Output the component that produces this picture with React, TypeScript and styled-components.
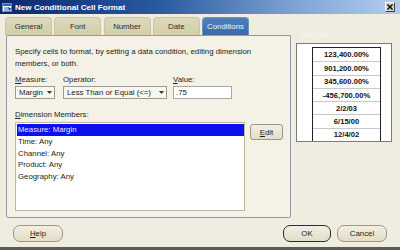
import React from "react";
import styled, { createGlobalStyle, css } from "styled-components";

const GlobalStyle = createGlobalStyle`
  html, body { margin: 0; padding: 0; background: #efeddf; }
  body { font-family: "Liberation Sans", Arial, sans-serif; font-size: 7.8px; color: #222; }
  * { box-sizing: border-box; }
`;

const Window = styled.div`
  width: 400px;
  height: 250px;
  background: #efeddf;
  display: flex;
  flex-direction: column;
  border-bottom: 3px solid #5c5c58;
  overflow: hidden;
`;

const TitleBar = styled.div`
  height: 14px;
  flex: none;
  display: flex;
  align-items: center;
  padding: 0 5px 0 2px;
  background: linear-gradient(to right, #0b2670 0%, #2a5aa0 40%, #7fa6d6 75%, #b4cdee 100%);
`;

const TitleText = styled.span`
  flex: 1;
  margin-left: 2px;
  color: #fff;
  font-weight: bold;
  font-size: 8.1px;
`;

const CloseBtn = styled.div`
  width: 10px;
  height: 10px;
  background: #d4d0c8;
  border: 1px solid;
  border-color: #ffffff #404040 #404040 #ffffff;
  display: flex;
  align-items: center;
  justify-content: center;
`;

const Body = styled.div`
  flex: 1;
  display: flex;
  flex-direction: column;
  padding: 3px 0 0 5px;
`;

const Main = styled.div`
  display: flex;
  gap: 5px;
`;

const LeftCol = styled.div`
  width: 286px;
  display: flex;
  flex-direction: column;
`;

const Tabs = styled.div`
  display: flex;
  gap: 2.25px;
  height: 18px;
  position: relative;
  z-index: 1;
`;

const Tab = styled.div<{ $active?: boolean }>`
  width: 47px;
  height: 18px;
  display: flex;
  align-items: center;
  justify-content: center;
  border-radius: 4px 4px 0 0;
  border: 1px solid #c9c5a6;
  border-bottom: none;
  background: linear-gradient(#dcd9bb, #d1cea9);
  color: #2e2e26;
  ${(p) =>
    p.$active &&
    css`
      background: linear-gradient(#4f80bb, #3a6aa6);
      border-color: #6b93c4;
      color: #f4f7ff;
    `}
`;

const Panel = styled.div`
  margin-left: 1px;
  height: 183px;
  border: 1px solid #8f9ca8;
  border-radius: 0 0 2px 2px;
  background: #f4f2e6;
  padding: 10px 0 0 8px;
  display: flex;
  flex-direction: column;
`;

const Desc = styled.div`
  line-height: 12px;
  width: 250px;
`;

const FieldRow = styled.div`
  display: flex;
  margin-top: 4px;
`;

const Field = styled.div<{ $w: number; $gap: number }>`
  width: ${(p) => p.$w}px;
  margin-right: ${(p) => p.$gap}px;
  display: flex;
  flex-direction: column;
`;

const Label = styled.div`
  line-height: 12px;
  height: 12px;
`;

const U = styled.span`
  text-decoration: underline;
`;

const SelectBox = styled.div`
  height: 13px;
  border: 1px solid #9c9a90;
  background: #f8f7f0;
  display: flex;
  align-items: center;
  padding-left: 3px;
`;

const SelectText = styled.span`
  flex: 1;
`;

const Arrow = styled.span`
  width: 10px;
  display: flex;
  justify-content: center;
`;

const InputBox = styled.div`
  height: 13px;
  border: 1px solid #a9a79c;
  background: #ffffff;
  display: flex;
  align-items: center;
  padding-left: 2px;
`;

const DimLabel = styled.div`
  margin-top: 10px;
  line-height: 12px;
`;

const ListRow = styled.div`
  display: flex;
  gap: 5px;
  margin-top: 1px;
  align-items: flex-start;
`;

const ListBox = styled.div`
  width: 230px;
  height: 89px;
  border: 1px solid #bdb9a0;
  background: #fff;
  padding: 1px 0 0 1px;
`;

const ListItem = styled.div<{ $selected?: boolean }>`
  height: 11.75px;
  line-height: 11.75px;
  padding-left: 1px;
  ${(p) =>
    p.$selected &&
    css`
      background: #0c10ec;
      color: #e9e8ff;
    `}
`;

const Btn = styled.div<{ $w: number; $round?: boolean; $default?: boolean }>`
  width: ${(p) => p.$w}px;
  height: ${(p) => (p.$round ? 17 : 16)}px;
  display: flex;
  align-items: center;
  justify-content: center;
  background: linear-gradient(#f2efe2, #e2ddc8);
  border: 1px solid #9d9683;
  border-radius: ${(p) => (p.$round ? "7px" : "3px")};
  color: #222;
  ${(p) =>
    p.$default &&
    css`
      border: 1.5px solid #2e2c26;
    `}
`;

const EditBtn = styled(Btn)`
  margin-top: 2px;
`;

const PreviewCol = styled.div`
  width: 96px;
  display: flex;
  flex-direction: column;
  padding-top: 12px;
`;

const PreviewLabel = styled.div`
  line-height: 12px;
  padding-left: 5px;
  color: #f7f6ee;
`;

const PreviewBox = styled.div`
  margin-top: 2px;
  height: 99px;
  border: 1px solid #7d7d78;
  background: #fff;
  display: flex;
  padding: 3px 0 0 15px;
`;

const Table = styled.div`
  width: 69px;
  border: 1px solid #222;
  border-bottom: none;
  display: flex;
  flex-direction: column;
`;

const Cell = styled.div`
  height: 13.6px;
  display: flex;
  align-items: center;
  justify-content: center;
  font-weight: bold;
  font-size: 7.6px;
  color: #111;
  border-top: 1px solid #c8c8c8;
  &:first-child { border-top: none; }
`;

const Footer = styled.div`
  display: flex;
  align-items: center;
  margin-top: 7px;
  padding: 0 13px 0 8px;
  gap: 6px;
`;

const Spacer = styled.div`
  flex: 1;
`;

const TitleIcon = () => (
  <svg width="11" height="11" viewBox="0 0 11 11">
    <rect x="0.5" y="1.5" width="9" height="8" fill="#fff" stroke="#6d8fc0" />
    <rect x="1" y="2" width="8" height="2" fill="#3466b0" />
    <path d="M2 6h5M2 8h4" stroke="#3466b0" strokeWidth="1" />
    <path d="M6 5l4 2-2 1-1 2z" fill="#1d4fa0" />
  </svg>
);

const DownArrow = () => (
  <svg width="5" height="3" viewBox="0 0 5 3">
    <path d="M0 0h5L2.5 3z" fill="#333" />
  </svg>
);

const tabs = ["General", "Font", "Number", "Date", "Conditions"];
const items = ["Measure: Margin", "Time: Any", "Channel: Any", "Product: Any", "Geography: Any"];
const values = ["123,400.00%", "901,200.00%", "345,600.00%", "-456,700.00%", "2/2/03", "6/15/00", "12/4/02"];

export default function App() {
  return (
    <>
      <GlobalStyle />
      <Window>
        <TitleBar>
          <TitleIcon />
          <TitleText>New Conditional Cell Format</TitleText>
          <CloseBtn>
            <svg width="6" height="6" viewBox="0 0 6 6">
              <path d="M0.5 0.5l5 5M5.5 0.5l-5 5" stroke="#000" strokeWidth="1.4" />
            </svg>
          </CloseBtn>
        </TitleBar>
        <Body>
          <Main>
            <LeftCol>
              <Tabs>
                {tabs.map((t) => (
                  <Tab key={t} $active={t === "Conditions"}>
                    {t}
                  </Tab>
                ))}
              </Tabs>
              <Panel>
                <Desc>
                  Specify cells to format, by setting a data condition, editing dimension members, or both.
                </Desc>
                <FieldRow>
                  <Field $w={40} $gap={8}>
                    <Label>
                      <U>M</U>easure:
                    </Label>
                    <SelectBox>
                      <SelectText>Margin</SelectText>
                      <Arrow>
                        <DownArrow />
                      </Arrow>
                    </SelectBox>
                  </Field>
                  <Field $w={104} $gap={6}>
                    <Label>Operator:</Label>
                    <SelectBox>
                      <SelectText>Less Than or Equal (&lt;=)</SelectText>
                      <Arrow>
                        <DownArrow />
                      </Arrow>
                    </SelectBox>
                  </Field>
                  <Field $w={59} $gap={0}>
                    <Label>
                      <U>V</U>alue:
                    </Label>
                    <InputBox>.75</InputBox>
                  </Field>
                </FieldRow>
                <DimLabel>
                  <U>D</U>imension Members:
                </DimLabel>
                <ListRow>
                  <ListBox>
                    {items.map((it, i) => (
                      <ListItem key={it} $selected={i === 0}>
                        {it}
                      </ListItem>
                    ))}
                  </ListBox>
                  <EditBtn $w={33}>
                    <span>
                      <U>E</U>dit
                    </span>
                  </EditBtn>
                </ListRow>
              </Panel>
            </LeftCol>
            <PreviewCol>
              <PreviewLabel>Sample</PreviewLabel>
              <PreviewBox>
                <Table>
                  {values.map((v) => (
                    <Cell key={v}>{v}</Cell>
                  ))}
                </Table>
              </PreviewBox>
            </PreviewCol>
          </Main>
          <Footer>
            <Btn $w={50} $round>
              <span>
                <U>H</U>elp
              </span>
            </Btn>
            <Spacer />
            <Btn $w={48} $round $default>
              OK
            </Btn>
            <Btn $w={50} $round>
              Cancel
            </Btn>
          </Footer>
        </Body>
      </Window>
    </>
  );
}
